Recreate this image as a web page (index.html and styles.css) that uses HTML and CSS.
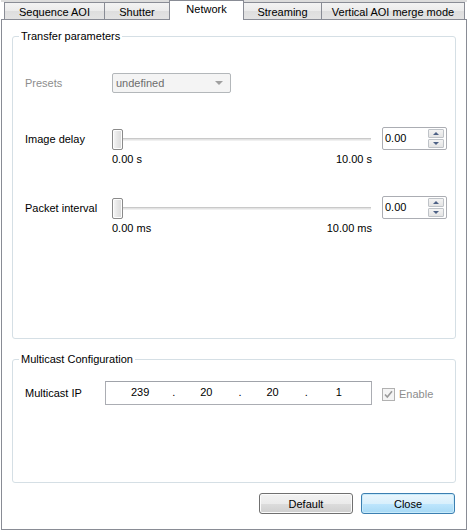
FILE: index.html
```html
<!DOCTYPE html>
<html>
<head>
<meta charset="utf-8">
<link rel="stylesheet" href="styles.css">
</head>
<body>
<div class="window">
  <div class="tabstrip">
    <span class="fill fill-l"></span>
    <div class="tab t1">Sequence AOI</div>
    <div class="tab t2">Shutter</div>
    <div class="tab selected t3">Network</div>
    <div class="tab t4 after-sel">Streaming</div>
    <div class="tab t5 last">Vertical AOI merge mode</div>
    <span class="fill fill-r"></span>
  </div>
  <div class="panel">
    <fieldset class="group g1">
      <legend>Transfer parameters</legend>
      <div class="row presets">
        <span class="lbl disabled">Presets</span>
        <div class="combo"><span>undefined</span><span class="arrow"></span></div>
      </div>
      <div class="row slider-row first">
        <span class="lbl">Image delay</span>
        <div class="slider"><span class="thumb"></span><span class="track"></span></div>
        <div class="spin">
          <span class="val">0.00</span>
          <span class="spin-btns"><span class="sb up"><i></i></span><span class="sb down"><i></i></span></span>
        </div>
      </div>
      <div class="scale"><span>0.00 s</span><span>10.00 s</span></div>
      <div class="row slider-row second">
        <span class="lbl">Packet interval</span>
        <div class="slider"><span class="thumb"></span><span class="track"></span></div>
        <div class="spin">
          <span class="val">0.00</span>
          <span class="spin-btns"><span class="sb up"><i></i></span><span class="sb down"><i></i></span></span>
        </div>
      </div>
      <div class="scale"><span>0.00 ms</span><span>10.00 ms</span></div>
    </fieldset>
    <fieldset class="group g2">
      <legend>Multicast Configuration</legend>
      <div class="row ip-row">
        <span class="lbl ip-lbl">Multicast IP</span>
        <div class="ipbox">
          <span class="oct">239</span><span class="dot">.</span>
          <span class="oct">20</span><span class="dot">.</span>
          <span class="oct">20</span><span class="dot">.</span>
          <span class="oct">1</span>
        </div>
        <span class="check">
          <svg width="13" height="13" viewBox="0 0 13 13"><rect x="0.5" y="0.5" width="12" height="12" fill="#f4f4f4" stroke="#b1b1b1"/><path d="M3 6.5 L5.3 9 L10 3.2" fill="none" stroke="#9a9a9a" stroke-width="1.6"/></svg>
        </span>
        <span class="enable">Enable</span>
      </div>
    </fieldset>
    <div class="buttons">
      <button class="btn">Default</button>
      <button class="btn focused">Close</button>
    </div>
  </div>
</div>
</body>
</html>
```
FILE: styles.css
```css
* { box-sizing: border-box; }
html, body { margin: 0; padding: 0; background: #fff; }
body {
  width: 468px; height: 530px; overflow: hidden;
  font-family: "Liberation Sans", Arial, sans-serif;
  font-size: 11px; color: #000;
}
.window { width: 468px; height: 530px; }

/* tabs */
.tabstrip {
  display: flex; align-items: flex-end;
  height: 20px; margin-left: 1px; width: 466px;
  background: linear-gradient(#dcdcdc, #dcdcdc) 0 0 / 100% 2px no-repeat;
}
.fill { height: 1px; background: #898c95; align-self: flex-end; }
.fill-l { width: 3px; }
.fill-r { flex: 1; }
.tab {
  height: 18px;
  border: 1px solid #898c95; border-right: none;
  background: linear-gradient(#f3f3f3, #ebebeb 50%, #dedede 51%, #e3e3e3);
  display: flex; align-items: center; justify-content: center;
  padding-top: 2px; line-height: 13px;
  white-space: nowrap;
}
.tab.after-sel { border-left: none; }
.tab.last { border-right: 1px solid #898c95; }
.tab.selected {
  height: 20px; background: #fff;
  border-right: 1px solid #898c95; border-bottom: none;
  padding-top: 0; padding-bottom: 2px;
}
.t1 { width: 100px; }
.t2 { width: 65px; }
.t3 { width: 75px; }
.t4 { width: 77px; }
.t5 { width: 144px; }

/* panel */
.panel {
  margin-left: 1px; width: 466px; height: 510px;
  border: 1px solid #898c95; border-top: none;
  padding: 9px 10px 0 10px;
  display: flex; flex-direction: column;
}
.group {
  margin: 0; padding: 0 0 0 12px;
  border: 1px solid #d5dfe5; border-radius: 3px;
  min-width: 0;
}
.group legend {
  margin-left: -6px; padding: 0 2px;
  line-height: 14px; height: 14px;
}
.g1 { height: 310px; }
.g2 { height: 131px; margin-top: 13px; }

.row { display: flex; align-items: center; }
.lbl { width: 87px; flex: none; white-space: nowrap; }
.lbl.disabled { color: #8d8d8d; }

.presets { margin-top: 30px; height: 20px; }
.combo {
  width: 119px; height: 20px;
  border: 1px solid #b3b7ba; border-radius: 2px;
  background: #f4f4f4; color: #6d6d6d;
  display: flex; align-items: center; justify-content: space-between;
  padding: 0 7px 0 3px;
}
.arrow {
  width: 0; height: 0;
  border-left: 4px solid transparent; border-right: 4px solid transparent;
  border-top: 4px solid #a0a0a0;
}

.slider-row { height: 23px; }
.slider-row.first { margin-top: 34px; }
.slider-row.second { margin-top: 30px; }
.slider {
  width: 259px; height: 23px; flex: none;
  display: flex; align-items: center;
}
.thumb {
  width: 11px; height: 21px; margin-top: 2px; flex: none;
  border: 1px solid #8a8a8a; border-radius: 2px;
  background: linear-gradient(90deg, #f7f7f7, #e6e6e6 50%, #d9d9d9);
  box-shadow: inset 0 0 0 1px #fdfdfd;
}
.track {
  flex: 1; height: 3px; margin-top: 2px;
  border-top: 1px solid #c9c9c9; border-bottom: 1px solid #f0f0f0;
  background: #e3e3e3;
}
.spin {
  margin-left: 11px; width: 65px; height: 23px; flex: none;
  border: 1px solid #abadb3;
  border-radius: 2px;
  display: flex; align-items: center; justify-content: space-between;
  padding: 0 2px 0 2px;
}
.val { margin-top: -2px; }
.spin-btns { display: flex; flex-direction: column; gap: 1px; }
.sb {
  width: 16px; height: 9px;
  border: 1px solid #bfc3c8; border-radius: 1px;
  background: linear-gradient(#f4f4f4, #e4e4e4);
  display: flex; align-items: center; justify-content: center;
}
.sb i { width: 0; height: 0; border-left: 3px solid transparent; border-right: 3px solid transparent; }
.sb.up i { border-bottom: 3px solid #4d6185; }
.sb.down i { border-top: 3px solid #4d6185; }

.scale {
  margin-left: 87px; width: 260px;
  display: flex; justify-content: space-between;
  line-height: 13px; margin-top: 3px;
}

/* multicast */
.ip-row { margin-top: 15px; height: 24px; }
.ip-lbl { width: 80px; }
.ipbox {
  width: 267px; height: 24px; flex: none;
  border: 1px solid #abadb3; border-top-color: #a0a3aa;
  display: flex; align-items: center;
  padding-bottom: 2px;
}
.oct { flex: 1; text-align: center; }
.oct:first-child { padding-left: 2px; }
.dot { width: 2px; text-align: center; }
.check { margin-left: 10px; width: 13px; height: 13px; display: flex; margin-top: 2px; }
.enable { margin-left: 4px; color: #8d8d8d; margin-top: 2px; }

/* buttons */
.buttons {
  display: flex; justify-content: flex-end; gap: 8px;
  margin-top: 10px; padding-right: 1px;
}
.btn {
  width: 94px; height: 21px; padding: 0;
  font-family: "Liberation Sans", Arial, sans-serif; font-size: 11px; color: #000;
  border: 1px solid #707070; border-radius: 3px;
  background: linear-gradient(#f2f2f2, #ebebeb 50%, #dddddd 51%, #cfcfcf);
  box-shadow: inset 0 0 0 1px #fbfbfb;
}
.btn.focused {
  border-color: #3c7fb1;
  background: linear-gradient(#eaf6fd, #d9f0fc 50%, #bee6fd 51%, #a7d9f5);
  box-shadow: inset 0 0 0 1px #c8ebfb;
}
```
